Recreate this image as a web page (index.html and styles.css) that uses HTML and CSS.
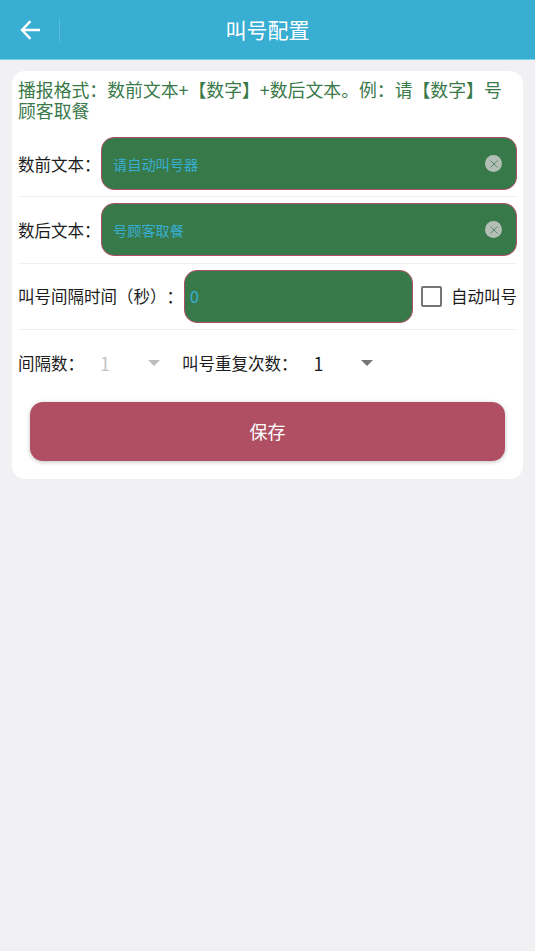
FILE: index.html
```html
<!DOCTYPE html>
<html lang="zh-CN">
<head>
    <meta charset="UTF-8">
    <meta name="viewport" content="width=device-width, initial-scale=1.0">
    <title>叫号配置</title>
    <link rel="stylesheet" href="styles.css">
</head>
<body>
    <!-- 顶部导航 -->
    <header class="navbar">
        <button class="back-btn" type="button" aria-label="返回">
            <svg width="20" height="20" viewBox="0 0 20 20" fill="none" stroke="#fff" stroke-width="2.400">
                <path d="M20 10H2M10.500 1.200L2 10l8.500 8.800"/>
            </svg>
        </button>
        <h1 class="navbar-title">叫号配置</h1>
    </header>

    <main class="card">
        <p class="hint">播报格式：数前文本+【数字】+数后文本。例：请【数字】号顾客取餐</p>

        <div class="form-row">
            <label class="row-label">数前文本：</label>
            <div class="field">
                <span class="placeholder">请自动叫号器</span>
                <span class="clear-icon">
                    <svg width="8" height="8" viewBox="0 0 8 8" stroke="#5f8a6a" stroke-width="1"><path d="M.5.500l7 7M7.500.500l-7 7"/></svg>
                </span>
            </div>
        </div>

        <div class="form-row">
            <label class="row-label">数后文本：</label>
            <div class="field">
                <span class="placeholder">号顾客取餐</span>
                <span class="clear-icon">
                    <svg width="8" height="8" viewBox="0 0 8 8" stroke="#5f8a6a" stroke-width="1"><path d="M.5.500l7 7M7.500.500l-7 7"/></svg>
                </span>
            </div>
        </div>

        <div class="form-row">
            <label class="row-label">叫号间隔时间（秒）：</label>
            <div class="field field-short">
                <span class="placeholder placeholder-num">0</span>
            </div>
            <div class="check-wrap">
                <span class="checkbox"></span>
                <span class="check-text">自动叫号</span>
            </div>
        </div>

        <div class="select-row">
            <span class="row-label">间隔数：</span>
            <div class="picker picker-off">
                <span>1</span>
                <i class="caret"></i>
            </div>
            <span class="row-label">叫号重复次数：</span>
            <div class="picker">
                <span>1</span>
                <i class="caret"></i>
            </div>
        </div>

        <button class="save-btn" type="button">保存</button>
    </main>
</body>
</html>
```

FILE: styles.css
```css
/* 基础样式 */
body {
    margin: 0;
    background: #f1f1f3;
    color: #1c1c1c;
    font-family: "Noto Sans CJK SC", "Noto Sans", sans-serif;
    text-spacing-trim: space-all;
}

/* 导航栏 */
.navbar {
    height: 59px;
    background: #39aed3;
    border-bottom: 1px solid #7fd0ea;
    display: flex;
    align-items: center;
    justify-content: center;
    position: relative;
}
.back-btn {
    position: absolute;
    left: 0;
    top: 18px;
    width: 60px;
    height: 24px;
    padding: 0 0 0 20px;
    background: none;
    border: 0;
    border-right: 1px solid #57bbdb;
    display: flex;
    align-items: center;
}
.navbar-title {
    margin: 0;
    color: #fff;
    font-size: 21px;
    font-weight: 400;
    line-height: 1;
}

/* 卡片 */
.card {
    margin: 11px 12px 0;
    padding: 8px 6px 18px;
    background: #fff;
    border-radius: 13px;
}
.hint {
    margin: 0 0 16px;
    color: #39794a;
    font-size: 17.850px;
    line-height: 21px;
}

.form-row {
    display: flex;
    align-items: center;
    padding: 0 0 6.250px;
    margin-bottom: 6px;
    border-bottom: 1px solid #f0f0f0;
}
.row-label {
    font-size: 16.500px;
    white-space: nowrap;
}
.field {
    flex: 1;
    height: 53px;
    box-sizing: border-box;
    padding: 0 14px 0 11.500px;
    background: #38794a;
    border: 1.500px solid #b04f63;
    border-radius: 13px;
    display: flex;
    align-items: center;
    justify-content: space-between;
}
.field-short {
    flex: none;
    width: 229px;
    margin-left: 1px;
    padding-left: 5px;
}
.placeholder {
    color: #39aed3;
    font-size: 14.200px;
}
.placeholder-num {
    font-size: 16px;
}
.clear-icon {
    width: 17px;
    height: 17px;
    border-radius: 50%;
    background: #b3bfb6;
    display: flex;
    align-items: center;
    justify-content: center;
}

.check-wrap {
    display: flex;
    align-items: center;
    margin-left: auto;
}
.checkbox {
    width: 17px;
    height: 17px;
    border: 2px solid #757575;
    border-radius: 2px;
}
.check-text {
    margin-left: 9px;
    font-size: 16.500px;
}

/* 下拉选择 */
.select-row {
    display: flex;
    align-items: center;
    height: 66px;
    margin-top: -6px;
}
.picker {
    display: flex;
    align-items: center;
    justify-content: space-between;
    width: 59px;
    padding-left: 16px;
    font-size: 18px;
}
.picker-off {
    width: 60px;
    padding-left: 16px;
    margin-right: 22px;
    color: #c4c4c4;
}
.caret {
    width: 0;
    height: 0;
    border-left: 6px solid transparent;
    border-right: 6px solid transparent;
    border-top: 6px solid #757575;
}
.picker-off .caret {
    border-top-color: #bdbdbd;
}

.save-btn {
    display: block;
    width: 475px;
    height: 59px;
    margin: 6px auto 0;
    background: #b04f63;
    border: 0;
    border-radius: 13px;
    box-shadow: 0 1px 4px rgba(0, 0, 0, 0.25);
    color: #fff;
    font-family: inherit;
    font-size: 18px;
}
```
